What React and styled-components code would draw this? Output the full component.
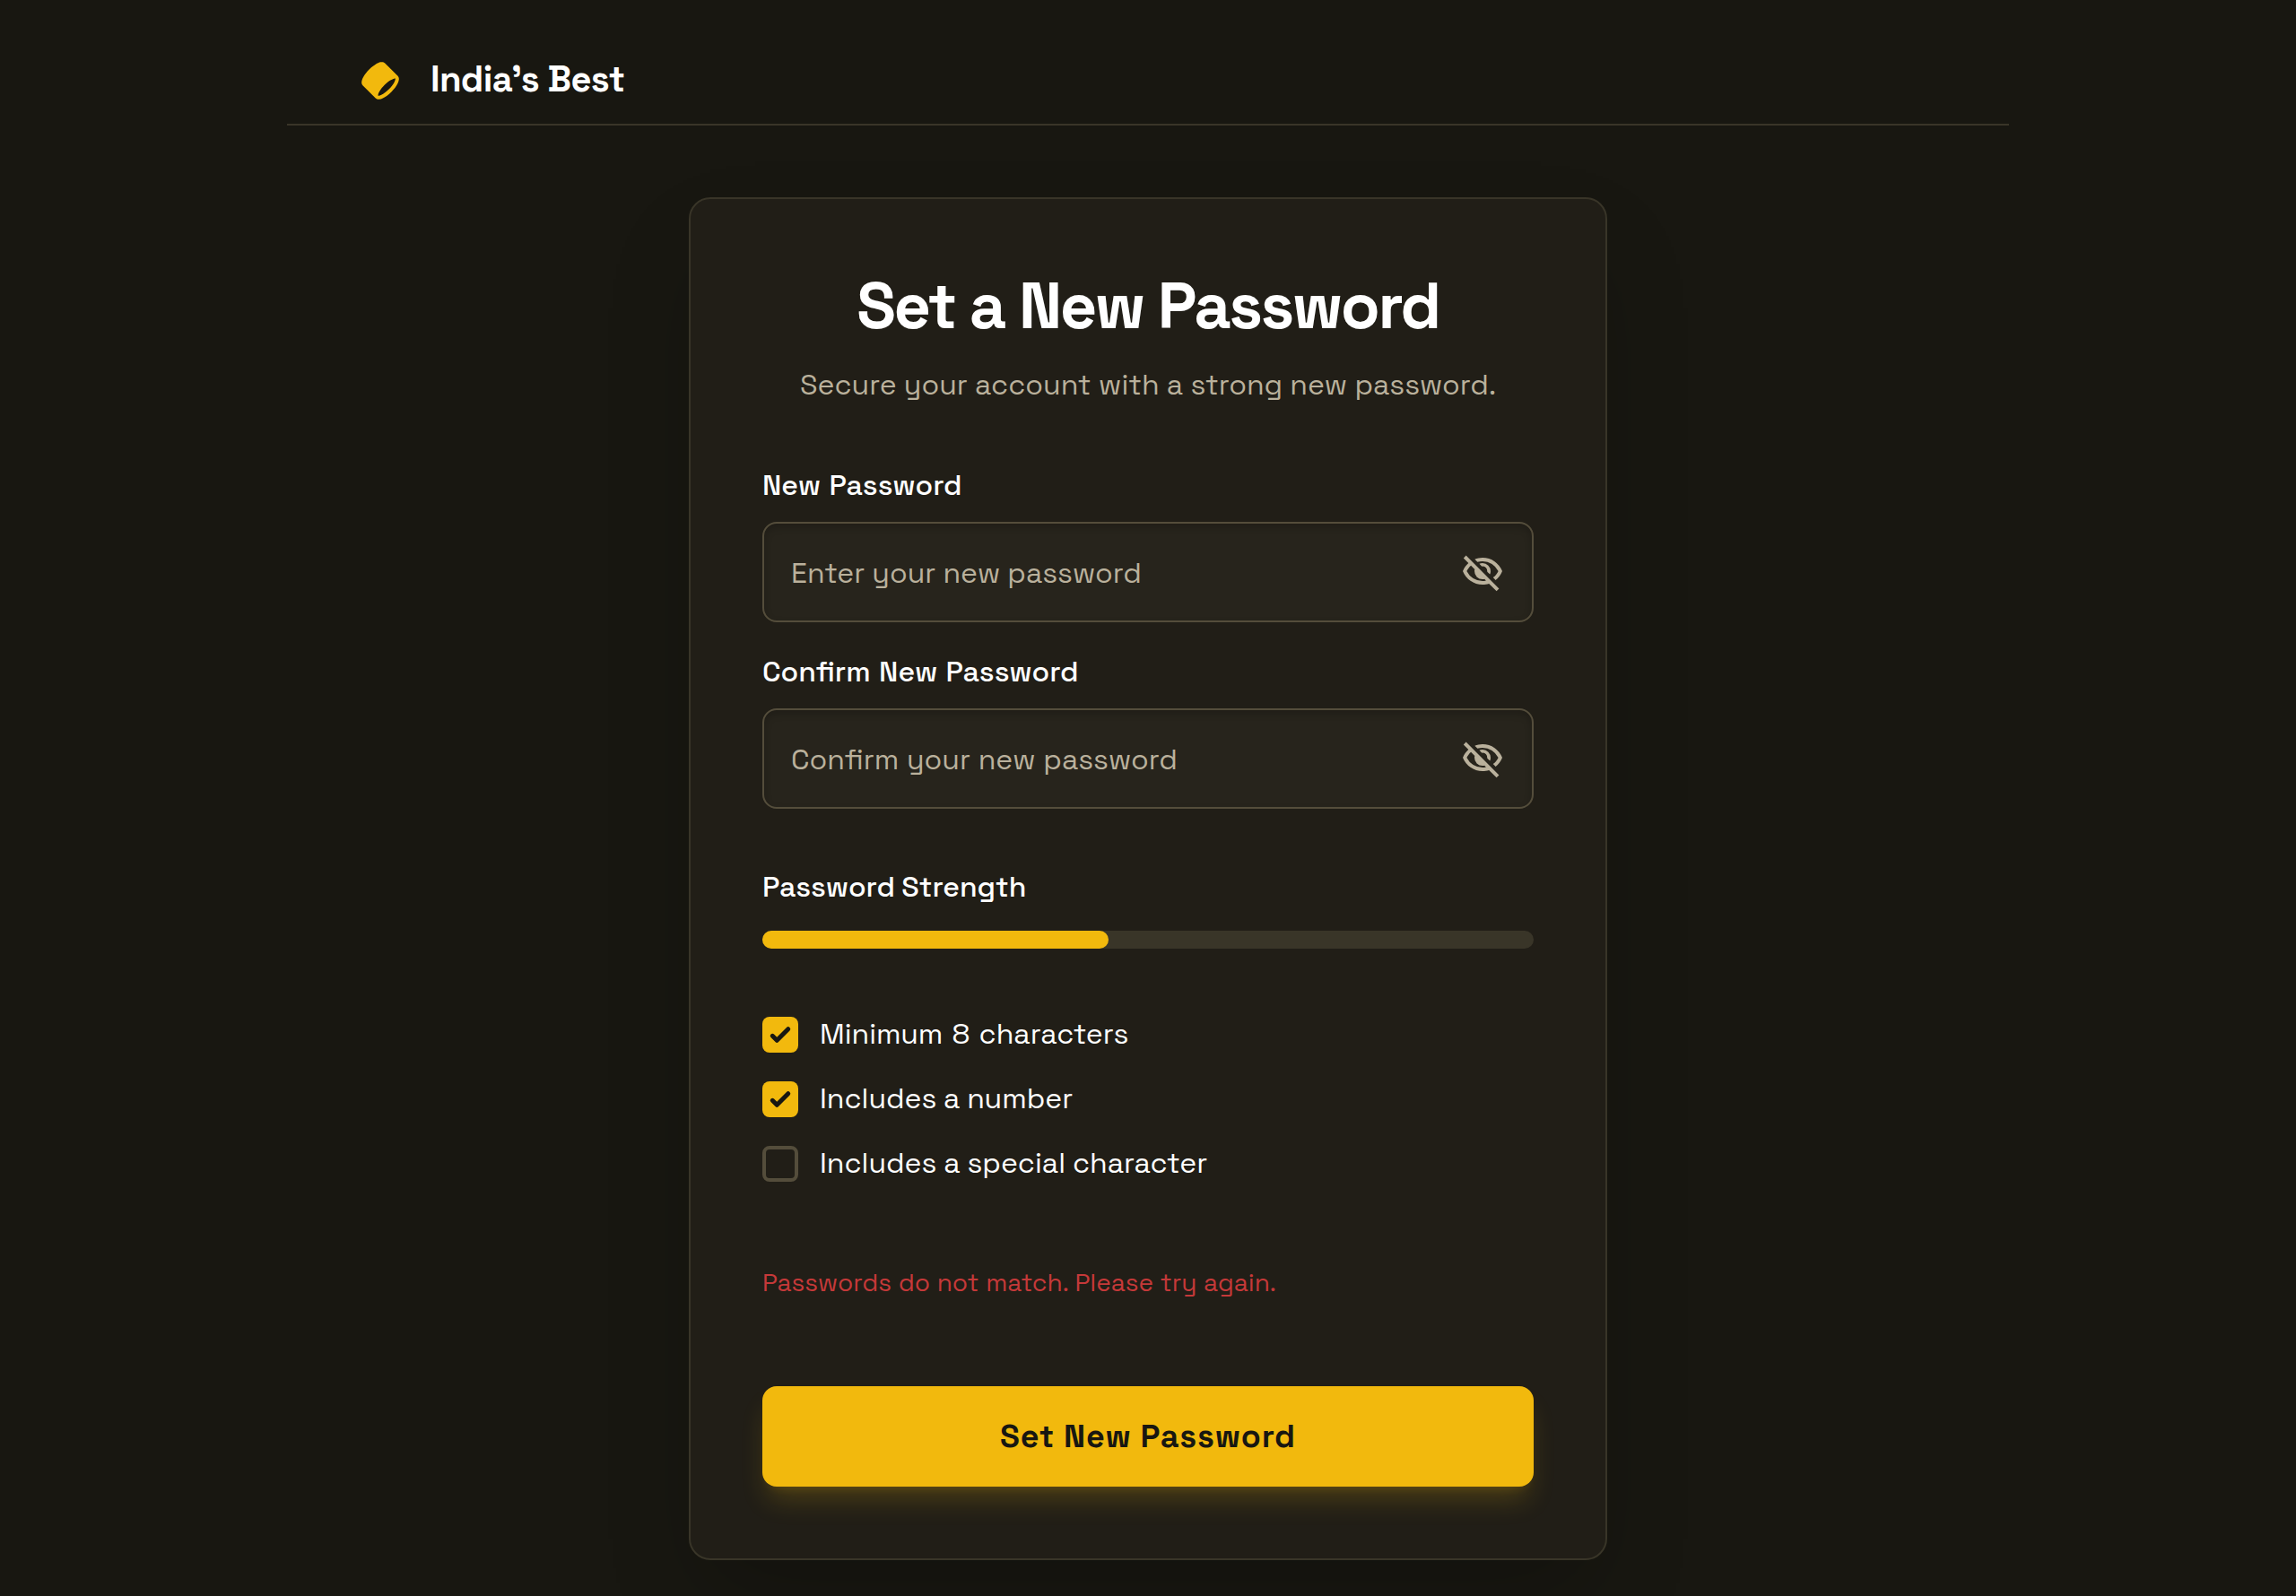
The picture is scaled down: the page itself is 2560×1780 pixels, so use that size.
import React, { useState } from 'react';
import styled, { createGlobalStyle } from 'styled-components';

const color = {
  page: '#181711',
  card: '#211e17',
  field: '#27241c',
  line: '#393528',
  outline: '#544d3b',
  muted: '#bab19c',
  primary: '#f2b90d',
  danger: '#c53939',
};

const GlobalStyle = createGlobalStyle`
  *, *::before, *::after { box-sizing: border-box; }
  html, body { margin: 0; height: 100%; }
  body {
    background: ${color.page};
    color: #fff;
    font-family: "Space Grotesk", Inter, "Noto Sans", sans-serif;
    font-size: 32px;
    line-height: 48px;
    overflow: hidden;
  }
`;

const Page = styled.div`
  display: flex;
  flex-direction: column;
  align-items: center;
  min-height: 100vh;
`;

const Header = styled.header`
  display: flex;
  align-items: center;
  gap: 32px;
  width: 1920px;
  height: 140px;
  padding: 40px 80px 0;
  border-bottom: 2px solid ${color.line};
`;

const Logo = styled.svg`
  width: 48px;
  height: 48px;
  margin-top: 2px;
  color: ${color.primary};
`;

const Brand = styled.h2`
  margin: 0;
  font-size: 40px;
  font-weight: 700;
  line-height: 50px;
  letter-spacing: -0.017em;
`;

const Card = styled.main`
  display: flex;
  flex-direction: column;
  width: 1024px;
  height: 1520px;
  margin-top: 80px;
  padding: 79px 80px 80px;
  background: ${color.card};
  border: 2px solid ${color.line};
  border-radius: 24px;
  box-shadow: 0 50px 100px -24px rgba(0, 0, 0, 0.25);
`;

const Title = styled.h1`
  margin: 0;
  font-size: 72px;
  font-weight: 700;
  line-height: 80px;
  letter-spacing: -0.033em;
  text-align: center;
`;

const Subtitle = styled.p`
  margin: 24px 0 0;
  color: ${color.muted};
  text-align: center;
`;

const Fields = styled.div`
  display: flex;
  flex-direction: column;
  gap: 31px;
  margin-top: 64px;
`;

const Field = styled.label`
  display: flex;
  flex-direction: column;
  gap: 17px;
`;

const Caption = styled.span`
  font-weight: 500;
  word-spacing: ${(p) => p.$space ?? 0}px;
`;

const InputBox = styled.span`
  display: flex;
  align-items: center;
  height: 112px;
  padding: 0 31px 0 30px;
  background: ${color.field};
  border: 2px solid ${color.outline};
  border-radius: 16px;
  box-shadow: inset 0 4px 8px rgba(0, 0, 0, 0.2);
`;

const Input = styled.input`
  flex: 1;
  min-width: 0;
  padding: 2px 0 0;
  border: 0;
  outline: 0;
  background: transparent;
  color: #fff;
  font: inherit;
  word-spacing: ${(p) => p.$space}px;
  &::placeholder { color: ${color.muted}; opacity: 1; }
`;

const EyeButton = styled.button`
  display: flex;
  padding: 0;
  border: 0;
  background: transparent;
  color: ${color.muted};
  cursor: pointer;
  svg { width: 48px; height: 48px; }
`;

const Strength = styled.section`
  display: flex;
  flex-direction: column;
  gap: 25px;
  margin-top: 63px;
`;

const Track = styled.div`
  height: 20px;
  border-radius: 10px;
  background: ${color.line};
`;

const Meter = styled.div`
  width: ${(p) => p.$value}%;
  height: 100%;
  border-radius: 10px;
  background: ${color.primary};
`;

const Rules = styled.ul`
  display: flex;
  flex-direction: column;
  gap: 24px;
  margin: 71px 0 0;
  padding: 0;
  list-style: none;
`;

const Rule = styled.li`
  display: flex;
  align-items: center;
  gap: 24px;
  word-spacing: ${(p) => p.$space}px;
`;

const Box = styled.span`
  display: flex;
  width: 40px;
  height: 40px;
  margin-top: 2px;
  border-radius: 8px;
  background: ${(p) => (p.$on ? color.primary : 'transparent')};
  border: ${(p) => (p.$on ? '0' : `4px solid ${color.outline}`)};
`;

const ErrorText = styled.p`
  margin: 88px 0 0;
  color: ${color.danger};
  font-size: 28px;
  line-height: 42px;
  word-spacing: 0.45px;
`;

const Submit = styled.button`
  height: 112px;
  margin-top: auto;
  border: 0;
  border-radius: 16px;
  background: ${color.primary};
  color: ${color.page};
  font: inherit;
  font-size: 36px;
  font-weight: 700;
  letter-spacing: 0.85px;
  box-shadow: 0 20px 30px -6px rgba(242, 185, 13, 0.2),
    0 8px 12px -8px rgba(242, 185, 13, 0.2);
  cursor: pointer;
`;

const LogoMark = () => (
  <Logo viewBox="0 0 48 48" fill="currentColor" aria-hidden="true">
    <path
      fillRule="evenodd"
      clipRule="evenodd"
      d="M39.475 21.6262C40.358 21.4363 40.6863 21.5589 40.7581 21.5934C40.7876 21.655 40.8547 21.857 40.8082 22.3336C40.7408 23.0255 40.4502 24.0046 39.8572 25.2301C38.6799 27.6631 36.5085 30.6631 33.5858 33.5858C30.6631 36.5085 27.6632 38.6799 25.2301 39.8572C24.0046 40.4502 23.0255 40.7407 22.3336 40.8082C21.8571 40.8547 21.6551 40.7875 21.5934 40.7581C21.5589 40.6863 21.4363 40.358 21.6262 39.475C21.8562 38.4054 22.4689 36.9657 23.5038 35.2817C24.7575 33.2417 26.5497 30.9744 28.7621 28.762C30.9744 26.5497 33.2417 24.7574 35.2817 23.5037C36.9657 22.4689 38.4054 21.8562 39.475 21.6262ZM4.41189 29.2403L18.7597 43.5881C19.8813 44.7097 21.4027 44.9179 22.7217 44.7893C24.0585 44.659 25.5148 44.1631 26.9723 43.4579C29.9052 42.0387 33.2618 39.5667 36.4142 36.4142C39.5667 33.2618 42.0387 29.9052 43.4579 26.9723C44.1631 25.5148 44.659 24.0585 44.7893 22.7217C44.9179 21.4027 44.7097 19.8813 43.5881 18.7597L29.2403 4.41187C27.8527 3.02428 25.8765 3.02573 24.2861 3.36776C22.6081 3.72863 20.7334 4.58419 18.8396 5.74801C16.4978 7.18716 13.9881 9.18353 11.5858 11.5858C9.18354 13.988 7.18717 16.4978 5.74802 18.8396C4.58421 20.7334 3.72865 22.6081 3.36778 24.2861C3.02574 25.8765 3.02429 27.8527 4.41189 29.2403Z"
    />
  </Logo>
);

const EyeOff = () => (
  <svg viewBox="0 -960 960 960" fill="currentColor" aria-hidden="true">
    <path d="m644-428-58-58q9-47-27-88t-93-32l-58-58q17-8 34.5-12t37.5-4q75 0 127.5 52.5T660-500q0 20-4 37.5T644-428Zm128 126-58-56q38-29 67.5-63.5T832-500q-50-101-143.5-160.5T480-720q-29 0-57 4t-55 12l-62-62q41-17 84-25.5t90-8.5q151 0 269 83.5T920-500q-23 59-60.5 109.5T772-302Zm20 246L624-222q-35 11-70.5 16.5T480-200q-151 0-269-83.5T40-500q21-53 53-98.5t73-81.5L56-792l56-56 736 736-56 56ZM222-624q-29 26-53 57t-41 67q50 101 143.5 160.5T480-280q20 0 39-2.5t39-5.5l-36-38q-11 3-21 4.5t-21 1.5q-75 0-127.5-52.5T300-500q0-11 1.5-21t4.5-21l-84-82Z" />
  </svg>
);

const Check = () => (
  <svg viewBox="0 0 16 16" width="40" height="40" fill={color.page} aria-hidden="true">
    <path d="M12.207 4.793a1 1 0 0 1 0 1.414l-5 5a1 1 0 0 1-1.414 0l-2-2a1 1 0 0 1 1.414-1.414L6.5 9.086l4.293-4.293a1 1 0 0 1 1.414 0z" />
  </svg>
);

function PasswordField({ caption, captionSpace, placeholder, placeholderSpace }) {
  const [visible, setVisible] = useState(false);
  return (
    <Field>
      <Caption $space={captionSpace}>{caption}</Caption>
      <InputBox>
        <Input type={visible ? 'text' : 'password'} placeholder={placeholder} $space={placeholderSpace} />
        <EyeButton type="button" aria-label="Toggle password visibility" onClick={() => setVisible(!visible)}>
          <EyeOff />
        </EyeButton>
      </InputBox>
    </Field>
  );
}

const rules = [
  { text: 'Minimum 8 characters', on: true, space: 1.9 },
  { text: 'Includes a number', on: true, space: -0.5 },
  { text: 'Includes a special character', on: false, space: -0.4 },
];

export default function App() {
  return (
    <>
      <GlobalStyle />
      <Page>
        <Header>
          <LogoMark />
          <Brand>India’s Best</Brand>
        </Header>
        <Card>
          <Title>Set a New Password</Title>
          <Subtitle>Secure your account with a strong new password.</Subtitle>
          <Fields>
            <PasswordField
              caption="New Password"
              captionSpace={1.2}
              placeholder="Enter your new password"
              placeholderSpace={-0.2}
            />
            <PasswordField
              caption="Confirm New Password"
              captionSpace={1.2}
              placeholder="Confirm your new password"
              placeholderSpace={0.5}
            />
          </Fields>
          <Strength>
            <Caption $space={-0.8}>Password Strength</Caption>
            <Track>
              <Meter $value={44.9} />
            </Track>
          </Strength>
          <Rules>
            {rules.map((r) => (
              <Rule key={r.text} $space={r.space}>
                <Box $on={r.on}>{r.on && <Check />}</Box>
                {r.text}
              </Rule>
            ))}
          </Rules>
          <ErrorText>Passwords do not match. Please try again.</ErrorText>
          <Submit type="button">Set New Password</Submit>
        </Card>
      </Page>
    </>
  );
}
